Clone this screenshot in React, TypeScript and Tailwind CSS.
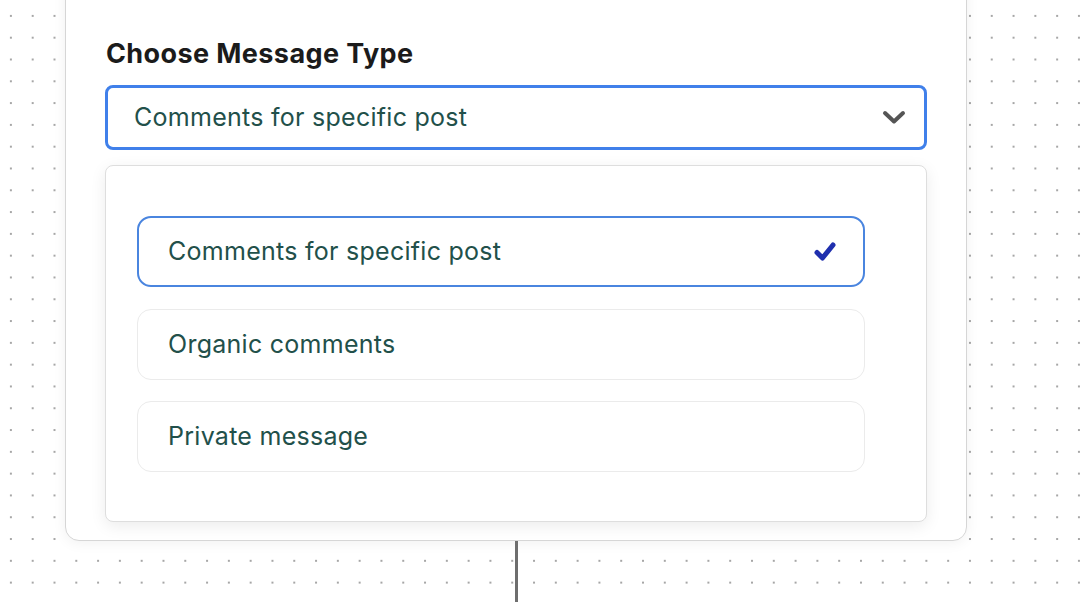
import React from 'react';

const options = ['Comments for specific post', 'Organic comments', 'Private message'];

const Check = () => (
  <svg width="22" height="21" viewBox="0 0 22 21" className="shrink-0">
    <path d="M3 11.5 L8.5 17 L19 4" fill="none" stroke="#1f2fae" strokeWidth="5" strokeLinecap="round" strokeLinejoin="round" />
  </svg>
);

const Chevron = () => (
  <svg width="24" height="15" viewBox="0 0 24 15">
    <path d="M3 3 L12 11.5 L21 3" fill="none" stroke="#555555" strokeWidth="4" strokeLinecap="round" strokeLinejoin="round" />
  </svg>
);

export default function App() {
  const selected = options[0];

  return (
    <div className="h-[602px] w-[1082px] overflow-hidden bg-white bg-[radial-gradient(circle,#a6a6a6_1px,transparent_1.3px)] bg-[size:21.8px_21.8px] bg-[position:0_5px] font-['Inter','Liberation_Sans',sans-serif]">
      <div className="ml-[65px] -mt-[20px] w-[902px] rounded-b-[14px] border border-[#d6d6d6] bg-white px-[39px] pt-[57px] pb-[18px] shadow-[0_2px_14px_rgba(0,0,0,0.06)]">
        <h2 className="ml-px text-[27px] font-bold leading-[32px] tracking-[0.4px] text-[#1b1b1b]">Choose Message Type</h2>

        <div className="mt-[15px] flex h-[65px] items-center justify-between rounded-[8px] border-[3px] border-[#4080ea] pl-[26px] pr-[18px]">
          <span className="text-[25px] leading-none tracking-[0.27px] text-[#22504a]">{selected}</span>
          <Chevron />
        </div>

        <div className="mt-[15px] flex flex-col gap-[21.5px] rounded-[8px] border border-[#dedede] bg-white pt-[50px] pb-[49px] pl-[31px] pr-[61px] shadow-[0_4px_16px_rgba(0,0,0,0.08)]">
          {options.map((opt) => {
            const active = opt === selected;
            return (
              <div
                key={opt}
                className={
                  active
                    ? 'flex h-[71px] items-center justify-between rounded-[14px] border-2 border-[#4a85df] pl-[29px] pr-[27px]'
                    : 'flex h-[71px] items-center justify-between rounded-[14px] border border-[#ebebeb] pl-[30px] pr-[28px]'
                }
              >
                <span className="text-[25px] leading-none tracking-[0.27px] text-[#22504a]">{opt}</span>
                {active && <Check />}
              </div>
            );
          })}
        </div>
      </div>

      <div className="ml-[515px] h-[70px] w-[3px] bg-[#6e6e6e]" />
    </div>
  );
}
